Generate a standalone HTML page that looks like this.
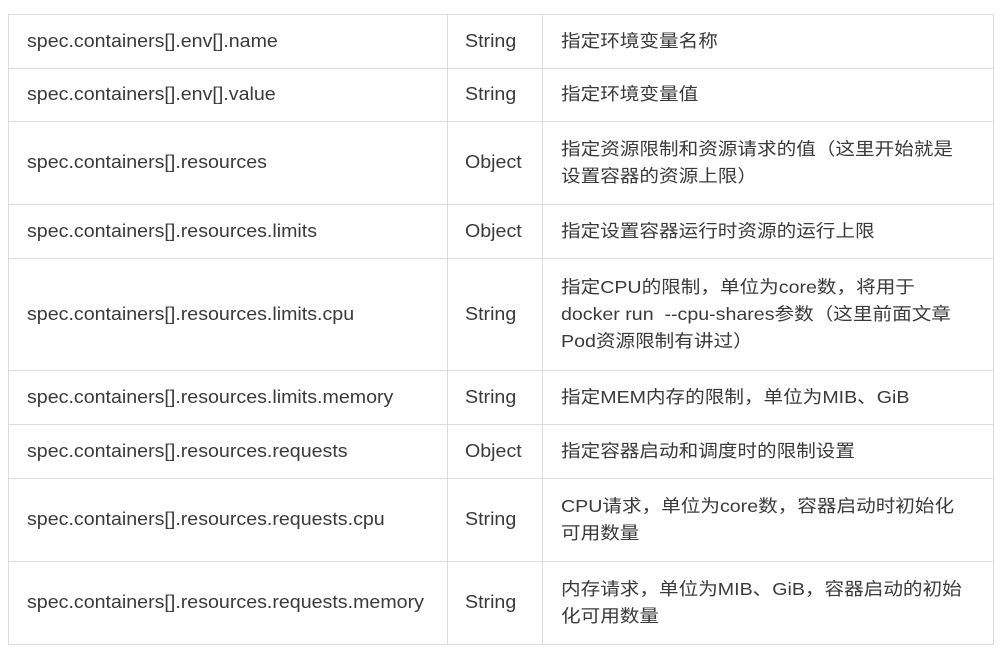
<!DOCTYPE html>
<html><head><meta charset="utf-8"><style>
body{margin:0;width:1000px;height:650px;background:#fff;position:relative;overflow:hidden;font-family:"Liberation Sans","Noto Sans CJK SC",sans-serif;color:#3a3a3a;font-size:18px}
.h{position:absolute;left:8px;width:986px;height:1px;background:#dcdcdc}
.v{position:absolute;top:14px;height:631px;width:1px;background:#dcdcdc}
.c{position:absolute;display:flex;align-items:center;line-height:27px;white-space:nowrap}
.c>div{transform-origin:left center}
.a>div{transform:scaleX(1.09)}
.b>div{transform:scaleX(1.12)}
</style></head><body>
<div class="v" style="left:8px"></div><div class="v" style="left:447px"></div><div class="v" style="left:542px"></div><div class="v" style="left:993px"></div>
<div class="h" style="top:14px"></div><div class="h" style="top:68px"></div><div class="h" style="top:121px"></div><div class="h" style="top:204px"></div><div class="h" style="top:258px"></div><div class="h" style="top:370px"></div><div class="h" style="top:424px"></div><div class="h" style="top:478px"></div><div class="h" style="top:561px"></div><div class="h" style="top:644px"></div>
<div id="rows"></div>
<script>
var r=[[14,68,"spec.containers[].env[].name","String","指定环境变量名称"],
[68,121,"spec.containers[].env[].value","String","指定环境变量值"],
[121,204,"spec.containers[].resources","Object","指定资源限制和资源请求的值（这里开始就是<br>设置容器的资源上限）"],
[204,258,"spec.containers[].resources.limits","Object","指定设置容器运行时资源的运行上限"],
[258,370,"spec.containers[].resources.limits.cpu","String","指定CPU的限制，单位为core数，将用于<br>docker run &nbsp;--cpu-shares参数（这里前面文章<br>Pod资源限制有讲过）"],
[370,424,"spec.containers[].resources.limits.memory","String","指定MEM内存的限制，单位为MIB、GiB"],
[424,478,"spec.containers[].resources.requests","Object","指定容器启动和调度时的限制设置"],
[478,561,"spec.containers[].resources.requests.cpu","String","CPU请求，单位为core数，容器启动时初始化<br>可用数量"],
[561,644,"spec.containers[].resources.requests.memory","String","内存请求，单位为MIB、GiB，容器启动的初始<br>化可用数量"]];
var h="";r.forEach(function(x){var s="top:"+x[0]+"px;height:"+(x[1]-x[0])+"px;";
h+='<div class="c a" style="'+s+'left:27px"><div>'+x[2]+'</div></div><div class="c a" style="'+s+'left:465px"><div>'+x[3]+'</div></div><div class="c b" style="'+s+'left:561px;font-size:17.5px"><div>'+x[4]+'</div></div>';});
document.getElementById("rows").innerHTML=h;
</script>
</body></html>
